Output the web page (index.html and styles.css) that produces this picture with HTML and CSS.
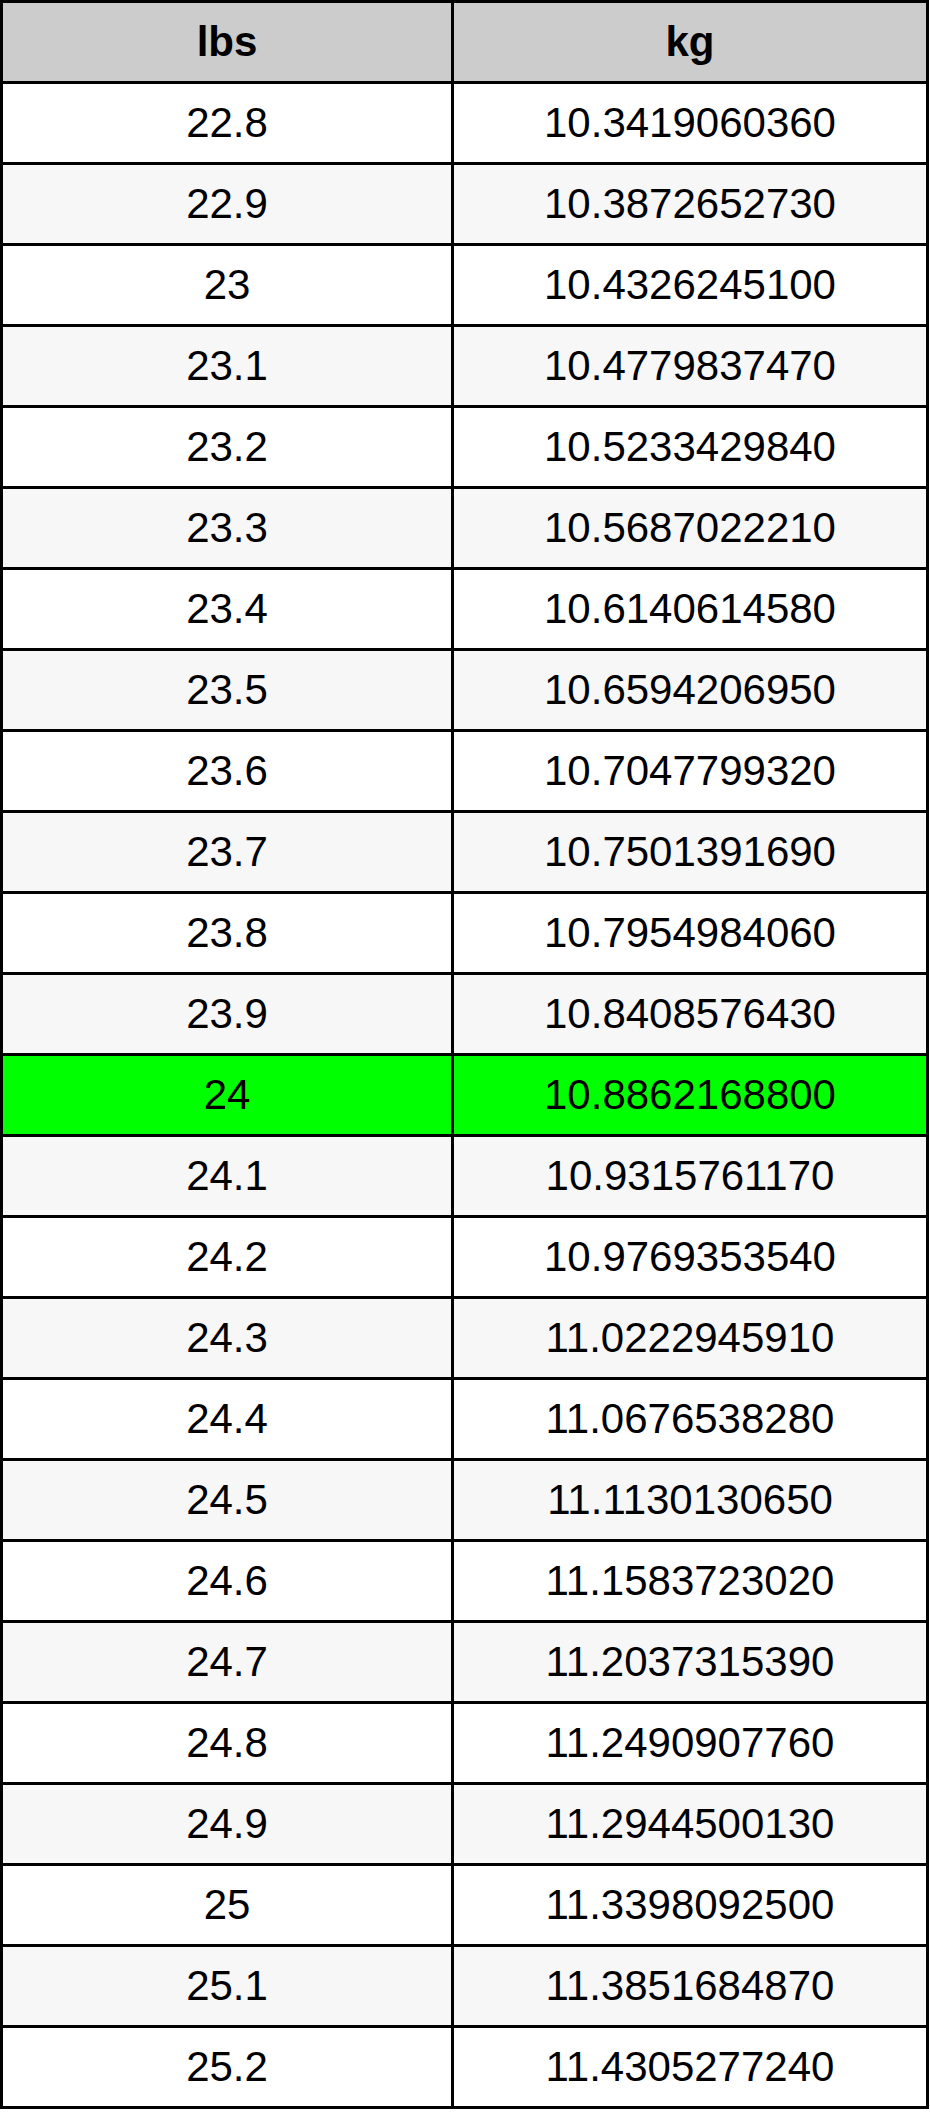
FILE: index.html
```html
<!DOCTYPE html>
<html>
<head>
<meta charset="utf-8">
<link rel="stylesheet" href="styles.css">
</head>
<body>
<table class="conv">
<colgroup><col class="c1"><col class="c2"></colgroup>
<thead>
<tr><th>lbs</th><th>kg</th></tr>
</thead>
<tbody>
<tr><td>22.8</td><td>10.3419060360</td></tr>
<tr><td>22.9</td><td>10.3872652730</td></tr>
<tr><td>23</td><td>10.4326245100</td></tr>
<tr><td>23.1</td><td>10.4779837470</td></tr>
<tr><td>23.2</td><td>10.5233429840</td></tr>
<tr><td>23.3</td><td>10.5687022210</td></tr>
<tr><td>23.4</td><td>10.6140614580</td></tr>
<tr><td>23.5</td><td>10.6594206950</td></tr>
<tr><td>23.6</td><td>10.7047799320</td></tr>
<tr><td>23.7</td><td>10.7501391690</td></tr>
<tr><td>23.8</td><td>10.7954984060</td></tr>
<tr><td>23.9</td><td>10.8408576430</td></tr>
<tr class="hl"><td>24</td><td>10.8862168800</td></tr>
<tr><td>24.1</td><td>10.9315761170</td></tr>
<tr><td>24.2</td><td>10.9769353540</td></tr>
<tr><td>24.3</td><td>11.0222945910</td></tr>
<tr><td>24.4</td><td>11.0676538280</td></tr>
<tr><td>24.5</td><td>11.1130130650</td></tr>
<tr><td>24.6</td><td>11.1583723020</td></tr>
<tr><td>24.7</td><td>11.2037315390</td></tr>
<tr><td>24.8</td><td>11.2490907760</td></tr>
<tr><td>24.9</td><td>11.2944500130</td></tr>
<tr><td>25</td><td>11.3398092500</td></tr>
<tr><td>25.1</td><td>11.3851684870</td></tr>
<tr><td>25.2</td><td>11.4305277240</td></tr>
</tbody>
</table>
</body>
</html>
```

FILE: styles.css
```css
html, body {
  margin: 0;
  padding: 0;
  background: #ffffff;
}

.conv {
  width: 929px;
  table-layout: fixed;
  border-collapse: separate;
  border-spacing: 3px;
  background: #000000;
  font-family: "Liberation Sans", Arial, sans-serif;
  font-size: 42px;
  color: #000000;
}

.c1 { width: 448px; }
.c2 { width: 472px; }

.conv th,
.conv td {
  height: 78px;
  padding: 0;
  text-align: center;
  vertical-align: middle;
  line-height: 1;
}

.conv th {
  background: #cccccc;
  font-weight: bold;
}

.conv tbody tr:nth-child(odd) td { background: #ffffff; }
.conv tbody tr:nth-child(even) td { background: #f7f7f7; }
.conv tbody tr.hl td { background: #00ff00; }
```
